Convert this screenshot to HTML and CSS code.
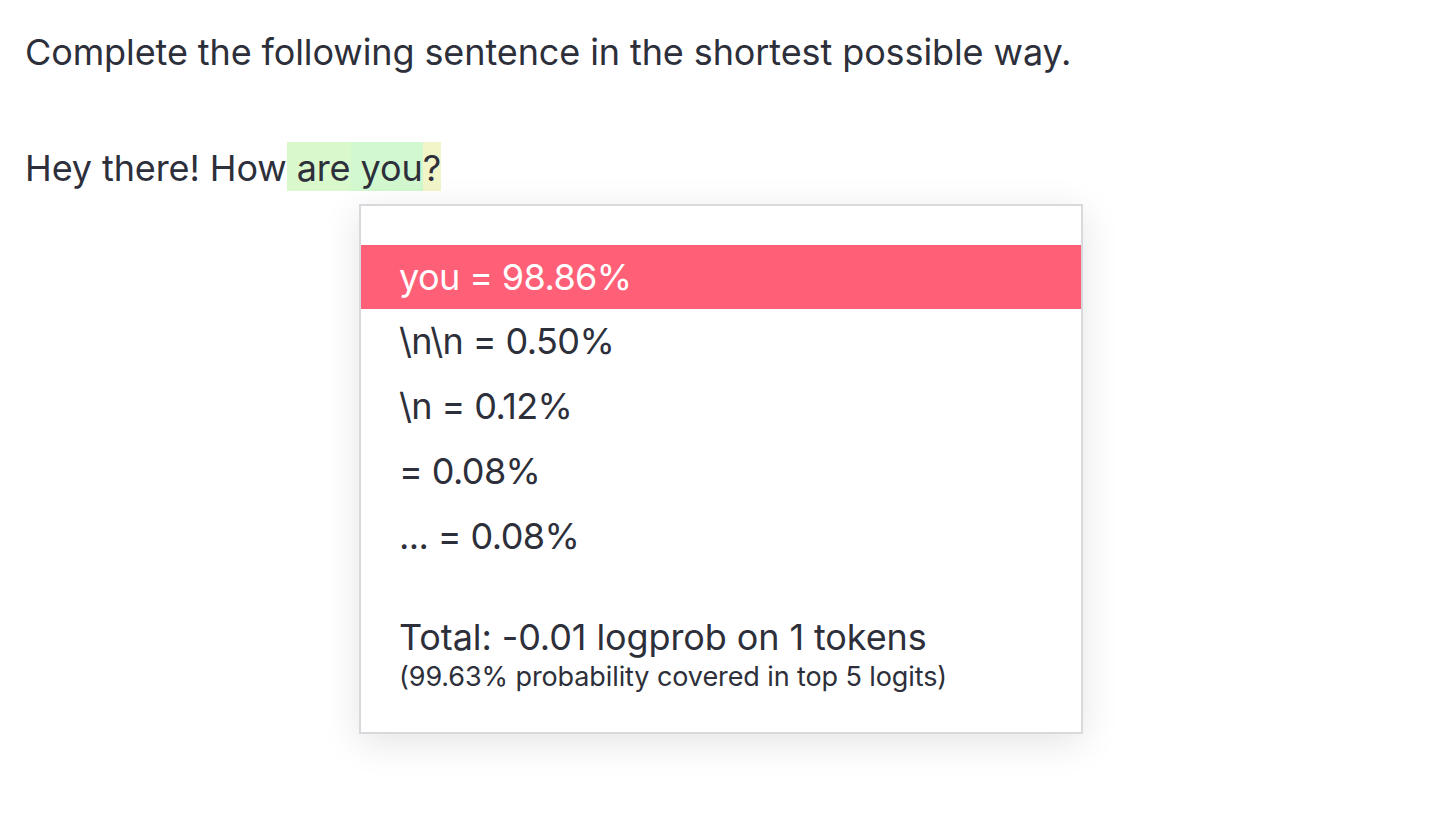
FILE: index.html
```html
<!DOCTYPE html>
<html>
<head>
<meta charset="utf-8">
<link rel="stylesheet" href="styles.css">
</head>
<body>
<div class="page">
  <p class="line first">Complete the following sentence in the shortest possible way.</p>
  <p class="line second">Hey there! How<span class="tok t1"> are</span><span class="tok t2"> you</span><span class="tok t3">?</span></p>
  <div class="popup">
    <ul class="choices">
      <li class="choice active">you = 98.86%</li>
      <li class="choice">\n\n = 0.50%</li>
      <li class="choice">\n = 0.12%</li>
      <li class="choice">= 0.08%</li>
      <li class="choice">... = 0.08%</li>
    </ul>
    <div class="total">Total: -0.01 logprob on 1 tokens</div>
    <div class="covered">(99.63% probability covered in top 5 logits)</div>
  </div>
</div>
</body>
</html>
```
FILE: styles.css
```css
* { box-sizing: border-box; }
html, body { margin: 0; padding: 0; background: #ffffff; }
body {
  font-family: Inter, "Noto Sans", sans-serif;
  color: #2d2f3a;
  width: 1456px;
  height: 838px;
  overflow: hidden;
}
.page { position: relative; padding: 28px 0 0 25px; }
.line {
  margin: 0;
  font-size: 36px;
  line-height: 49px;
  letter-spacing: -0.1px;
  white-space: pre;
}
.second { margin-top: 65px; }
.tok {
  display: inline-block;
  white-space: pre;
  line-height: 43px;
  padding-top: 5px;
  padding-bottom: 1px;
}
.t1 { background: #d9f8cb; }
.t2 { background: #d2f8cf; }
.t3 { background: #f2f5c8; }
.popup {
  position: absolute;
  left: 359px;
  top: 204px;
  width: 724px;
  height: 530px;
  background: #fff;
  border: 2px solid #d9d9dd;
  box-shadow: 0 8px 36px rgba(0,0,0,0.11);
  padding-top: 39px;
}
.choices { list-style: none; margin: 0; padding: 0; }
.choice {
  height: 65px;
  padding-left: 38px;
  font-size: 36px;
  line-height: 65px;
  letter-spacing: -0.6px;
  white-space: pre;
}
.choice.active { background: #ff6077; color: #fff; height: 64px; line-height: 64px; }
.total {
  margin-top: 46px;
  padding-left: 38px;
  font-size: 36px;
  line-height: 44px;
  letter-spacing: -0.1px;
}
.covered {
  padding-left: 38px;
  font-size: 27px;
  line-height: 36px;
  letter-spacing: -0.1px;
}
```
